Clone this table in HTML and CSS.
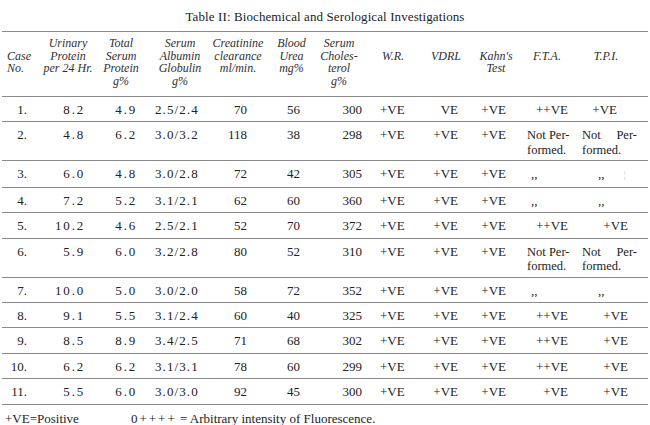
FILE: index.html
```html
<!DOCTYPE html>
<html lang="en">
<head>
<meta charset="utf-8">
<title>Table II: Biochemical and Serological Investigations</title>
<link rel="stylesheet" href="styles.css">
</head>
<body>
<div class="page">
  <h1 class="title">Table II: Biochemical and Serological Investigations</h1>
  <table class="data">
    <colgroup>
      <col class="c-case"><col class="c-urin"><col class="c-total"><col class="c-alb">
      <col class="c-creat"><col class="c-urea"><col class="c-chol"><col class="c-wr">
      <col class="c-vdrl"><col class="c-kahn"><col class="c-fta"><col class="c-tpi">
    </colgroup>
    <thead>
      <tr>
        <th class="drop">Case<br>No.</th>
        <th>Urinary<br>Protein<br>per 24 Hr.</th>
        <th>Total<br>Serum<br>Protein<br>g%</th>
        <th>Serum<br>Albumin<br>Globulin<br>g%</th>
        <th>Creatinine<br>clearance<br>ml/min.</th>
        <th>Blood<br>Urea<br>mg%</th>
        <th>Serum<br>Choles-<br>terol<br>g%</th>
        <th class="drop">W.R.</th>
        <th class="drop">VDRL</th>
        <th class="drop">Kahn's<br>Test</th>
        <th class="drop">F.T.A.</th>
        <th class="drop">T.P.I.</th>
      </tr>
    </thead>
    <tbody>
      <tr><td>1.</td><td>8.2</td><td>4.9</td><td>2.5/2.4</td><td>70</td><td>56</td><td>300</td><td>+VE</td><td>VE</td><td>+VE</td><td>++VE</td><td class="shift">+VE</td></tr>
      <tr><td>2.</td><td>4.8</td><td>6.2</td><td>3.0/3.2</td><td>118</td><td>38</td><td>298</td><td>+VE</td><td>+VE</td><td>+VE</td><td class="np"><span class="ln">Not Per-</span><span class="ln">formed.</span></td><td class="np"><span class="ln just"><span>Not</span><span>Per-</span></span><span class="ln">formed.</span></td></tr>
      <tr><td>3.</td><td>6.0</td><td>4.8</td><td>3.0/2.8</td><td>72</td><td>42</td><td>305</td><td>+VE</td><td>+VE</td><td>+VE</td><td class="ditto">,,</td><td class="ditto">,,<span class="speck">¦</span></td></tr>
      <tr><td>4.</td><td>7.2</td><td>5.2</td><td>3.1/2.1</td><td>62</td><td>60</td><td>360</td><td>+VE</td><td>+VE</td><td>+VE</td><td class="ditto">,,</td><td class="ditto">,,</td></tr>
      <tr><td>5.</td><td>10.2</td><td>4.6</td><td>2.5/2.1</td><td>52</td><td>70</td><td>372</td><td>+VE</td><td>+VE</td><td>+VE</td><td>++VE</td><td>+VE</td></tr>
      <tr><td>6.</td><td>5.9</td><td>6.0</td><td>3.2/2.8</td><td>80</td><td>52</td><td>310</td><td>+VE</td><td>+VE</td><td>+VE</td><td class="np"><span class="ln">Not Per-</span><span class="ln">formed.</span></td><td class="np"><span class="ln just"><span>Not</span><span>Per-</span></span><span class="ln">formed.</span></td></tr>
      <tr><td>7.</td><td>10.0</td><td>5.0</td><td>3.0/2.0</td><td>58</td><td>72</td><td>352</td><td>+VE</td><td>+VE</td><td>+VE</td><td class="ditto">,,</td><td class="ditto">,,</td></tr>
      <tr><td>8.</td><td>9.1</td><td>5.5</td><td>3.1/2.4</td><td>60</td><td>40</td><td>325</td><td>+VE</td><td>+VE</td><td>+VE</td><td>++VE</td><td>+VE</td></tr>
      <tr><td>9.</td><td>8.5</td><td>8.9</td><td>3.4/2.5</td><td>71</td><td>68</td><td>302</td><td>+VE</td><td>+VE</td><td>+VE</td><td>++VE</td><td>+VE</td></tr>
      <tr><td>10.</td><td>6.2</td><td>6.2</td><td>3.1/3.1</td><td>78</td><td>60</td><td>299</td><td>+VE</td><td>+VE</td><td>+VE</td><td>++VE</td><td>+VE</td></tr>
      <tr><td>11.</td><td>5.5</td><td>6.0</td><td>3.0/3.0</td><td>92</td><td>45</td><td>300</td><td>+VE</td><td>+VE</td><td>+VE</td><td>+VE</td><td>+VE</td></tr>
    </tbody>
  </table>
  <p class="legend"><span>+VE=Positive</span><span><span class="plus">0++++</span> = Arbitrary intensity of Fluorescence.</span></p>
</div>
</body>
</html>
```

FILE: styles.css
```css
html, body {
  margin: 0;
  padding: 0;
  background: #ffffff;
}

.page {
  width: 650px;
  height: 425px;
  padding: 0 2px;
  box-sizing: border-box;
  font-family: "Liberation Serif", "Times New Roman", serif;
  color: #222222;
  overflow: hidden;
}

.title {
  margin: 0;
  padding-top: 9px;
  height: 22px;
  box-sizing: content-box;
  font-size: 13px;
  font-weight: normal;
  line-height: 16px;
  text-align: center;
  letter-spacing: 0.1px;
  color: #222222;
}

.data {
  width: 646px;
  table-layout: fixed;
  border-collapse: collapse;
  font-size: 13px;
}

.c-case { width: 38px; }
.c-urin { width: 60px; }
.c-total { width: 42px; }
.c-alb { width: 64px; }
.c-creat { width: 64px; }
.c-urea { width: 43px; }
.c-chol { width: 52px; }
.c-wr { width: 50px; }
.c-vdrl { width: 50px; }
.c-kahn { width: 55px; }
.c-fta { width: 60px; }
.c-tpi { width: 68px; }

.data th {
  font-style: italic;
  font-weight: normal;
  font-size: 12px;
  line-height: 12.5px;
  vertical-align: top;
  text-align: center;
  padding: 5px 0 9px 0;
  color: #303030;
  border-top: 1px solid #8a8a8a;
  border-bottom: 1px solid #8a8a8a;
  white-space: nowrap;
}

.data th.drop {
  padding-top: 17.5px;
}

.data th:nth-child(1) { text-align: left; padding-left: 5px; }
.data th:nth-child(2) { padding-right: 4px; }
.data th:nth-child(4) { padding-left: 12px; }
.data th:nth-child(8) { padding-left: 6px; }
.data th:nth-child(9) { padding-left: 12px; }
.data th:nth-child(10) { padding-left: 7px; }
.data th:nth-child(11) { padding-right: 6px; }
.data th:nth-child(12) { padding-right: 16px; }

.data td {
  line-height: 13px;
  vertical-align: top;
  padding: 6px 0 5.4px 0;
  border-bottom: 1px solid #8a8a8a;
  white-space: nowrap;
}

.data td:nth-child(1) { text-align: right; padding-right: 13px; }
.data td:nth-child(2) { text-align: right; padding-right: 15px; letter-spacing: 1.8px; }
.data td:nth-child(3) { text-align: right; padding-right: 5px; letter-spacing: 1.8px; }
.data td:nth-child(4) { text-align: left; padding-left: 13px; letter-spacing: 1.1px; }
.data td:nth-child(5) { text-align: right; padding-right: 23px; }
.data td:nth-child(6) { text-align: right; padding-right: 13px; }
.data td:nth-child(7) { text-align: right; padding-right: 3px; }
.data td:nth-child(8) { text-align: left; padding-left: 15px; }
.data td:nth-child(9) { text-align: right; padding-right: 7px; }
.data td:nth-child(10) { text-align: right; padding-right: 14px; }
.data td:nth-child(11) { text-align: right; padding-right: 12px; }
.data td:nth-child(12) { text-align: right; padding-right: 20px; }

.data td.shift { padding-right: 31px; }

.data td.np {
  text-align: left;
  padding: 6px 0 3px 7px;
  font-size: 12.5px;
}

.data td.np:nth-child(12) { padding-left: 2px; }

.ln {
  display: block;
  height: 14.5px;
  line-height: 14.5px;
}

.just {
  display: flex;
  justify-content: space-between;
  width: 55px;
}

.data td.ditto {
  text-align: left;
  padding-left: 11px;
}

.data td.ditto:nth-child(12) { padding-left: 18px; }

.speck {
  margin-left: 19px;
  color: #c4c4c4;
  font-size: 11px;
}

.legend {
  margin: 6px 0 0 3px;
  display: flex;
  gap: 52px;
  font-size: 13px;
  line-height: 15px;
  color: #222222;
}

.plus {
  letter-spacing: 2px;
}
```
